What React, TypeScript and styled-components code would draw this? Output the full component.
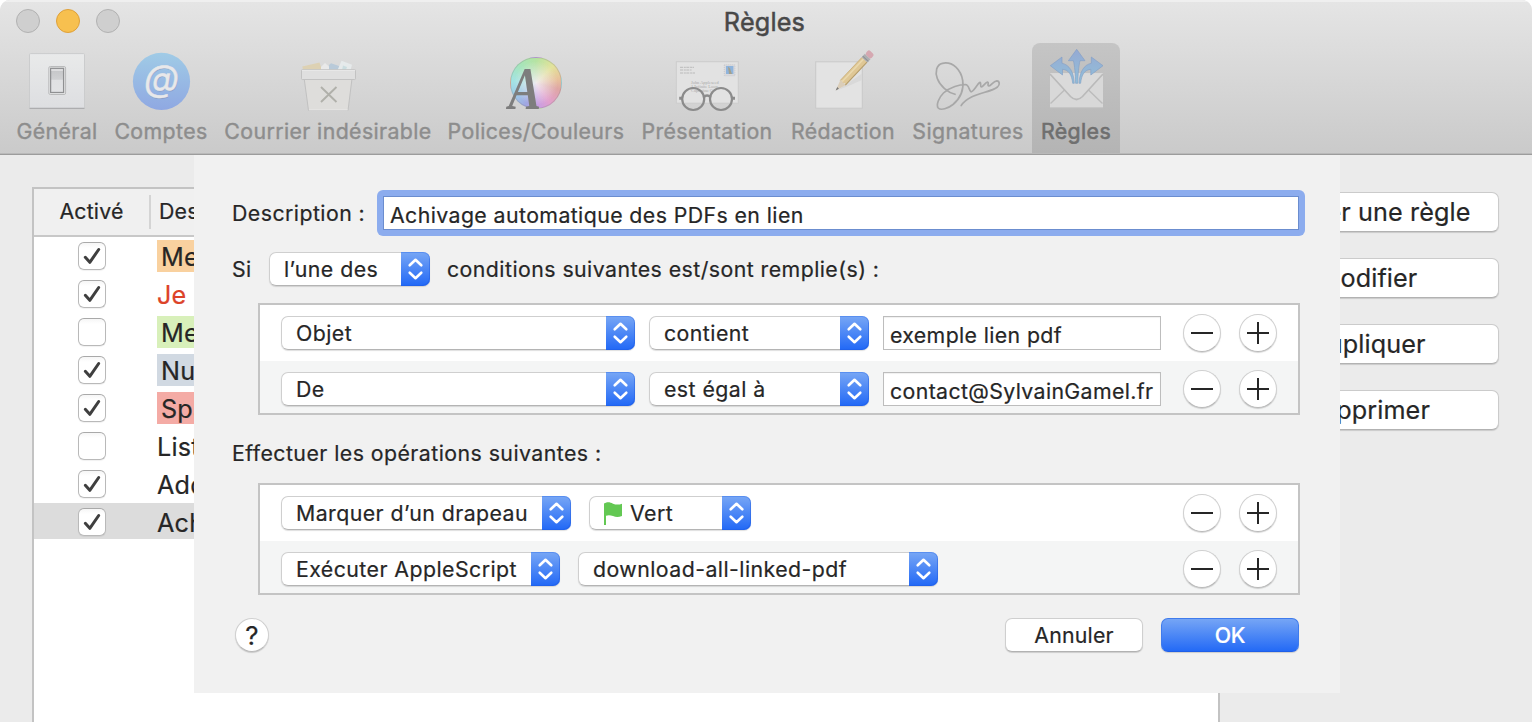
import React from 'react';
import styled, { createGlobalStyle } from 'styled-components';

const GlobalStyle = createGlobalStyle`
  * { box-sizing: border-box; }
  body {
    margin: 0;
    background: #fff;
    font-family: Inter, "Liberation Sans", sans-serif;
    font-size: 21.3px;
    letter-spacing: 0.45px;
    color: #262626;
    -webkit-text-stroke: 0.2px currentColor;
  }
  button, input { font: inherit; letter-spacing: inherit; color: inherit; }
`;

const Window = styled.div`
  width: 1532px;
  height: 722px;
  display: flex;
  flex-direction: column;
  overflow: hidden;
  border-radius: 10px 10px 0 0;
  background: #ebebeb;
`;

/* ---------- Title bar and toolbar ---------- */

const Header = styled.header`
  flex: none;
  height: 155px;
  display: flex;
  flex-direction: column;
  background: linear-gradient(#e5e5e5, #cacaca);
  border-bottom: 1px solid #9c9c9c;
  box-shadow: inset 0 2px 0 #efefef, inset 0 -1px 0 #b9b9b9;
`;

const TitleBar = styled.div`
  height: 43px;
  display: grid;
  grid-template-columns: 1fr auto 1fr;
  padding-right: 3px;
`;

const Lights = styled.div`
  display: flex;
  gap: 16px;
  padding: 9px 0 0 16px;
`;

const Light = styled.span<{ $active?: boolean }>`
  width: 24px;
  height: 24px;
  border-radius: 50%;
  background: ${p => (p.$active ? '#f7c04f' : '#cfcfcf')};
  border: 1px solid ${p => (p.$active ? '#dea03a' : '#b1b1b1')};
`;

const Title = styled.h1`
  margin: 0;
  font-size: 25.2px;
  font-weight: 400;
  letter-spacing: 0.2px;
  line-height: 44px;
  color: #484848;
  -webkit-text-stroke: 0.5px #484848;
`;

const Tabs = styled.nav`
  display: flex;
  padding-left: 8px;
`;

const Tab = styled.div<{ $width: number; $selected?: boolean }>`
  width: ${p => p.$width}px;
  height: 110px;
  padding-top: 3px;
  display: flex;
  flex-direction: column;
  align-items: center;
  border-radius: 8px 8px 0 0;
  background: ${p => (p.$selected ? 'linear-gradient(#c5c5c5, #b4b4b4)' : 'none')};
  color: ${p => (p.$selected ? '#6f6f6f' : '#8d8d8d')};
  -webkit-text-stroke: ${p => (p.$selected ? 0.6 : 0.4)}px currentColor;
`;

const TabLabel = styled.span`
  line-height: 26px;
  letter-spacing: 0.4px;
  white-space: nowrap;
`;

const IconStack = styled.div`
  display: grid;
  place-items: center;
  width: 80px;
  height: 72px;
  & > * { grid-area: 1 / 1; }
`;

const IconSvg = styled.svg`
  width: 80px;
  height: 72px;
  overflow: visible;
  -webkit-text-stroke: 0;
  letter-spacing: 0;
`;

const ColorWheel = styled.div`
  width: 52px;
  height: 52px;
  margin-top: 2px;
  border-radius: 50%;
  border: 1px solid rgba(120, 120, 120, 0.25);
  background:
    radial-gradient(circle, rgba(240, 236, 240, 0.95) 0, rgba(236, 236, 236, 0) 62%),
    conic-gradient(#b5e3a2, #e3e39c 45deg, #e8c29b 80deg, #dfa6a4 105deg, #e2a0cd 145deg, #cd9ee0 170deg, #a0a6e2 205deg, #9fcbe8 240deg, #a3e3e3 275deg, #a6e5bd 315deg, #b5e3a2);
`;

const GeneralIcon = () => (
  <IconSvg viewBox="0 0 80 72">
    <defs>
      <linearGradient id="plate" x1="0" y1="0" x2="0" y2="1">
        <stop offset="0" stopColor="#e9eaea" />
        <stop offset="1" stopColor="#dddee1" />
      </linearGradient>
      <linearGradient id="rocker" x1="0" y1="0" x2="0" y2="1">
        <stop offset="0" stopColor="#c4c5c7" />
        <stop offset="0.45" stopColor="#cfd0d2" />
        <stop offset="0.5" stopColor="#e0e1e3" />
        <stop offset="1" stopColor="#e2e3e5" />
      </linearGradient>
    </defs>
    <rect x="12.5" y="7.6" width="55" height="55" rx="1" fill="url(#plate)" stroke="#cbcccd" />
    <path d="M12.5 62.3h55" stroke="#adadaf" strokeWidth="1.3" />
    <rect x="31.8" y="20.5" width="16.8" height="28" rx="1.5" fill="#eceded" stroke="#b9babb" />
    <rect x="33.6" y="22.3" width="13" height="24.2" fill="url(#rocker)" stroke="#8f9092" strokeWidth="1.3" />
    <path d="M34.3 24h11.6" stroke="#e4e4e6" strokeWidth="1.4" />
  </IconSvg>
);

const AccountsIcon = () => (
  <IconSvg viewBox="0 0 80 72">
    <defs>
      <linearGradient id="accounts" x1="0" y1="0" x2="0" y2="1">
        <stop offset="0" stopColor="#a0cbe6" />
        <stop offset="1" stopColor="#8fa8e2" />
      </linearGradient>
    </defs>
    <circle cx="40.5" cy="35.4" r="28.6" fill="url(#accounts)" />
    <text x="41" y="46.4" textAnchor="middle" fontSize="36" fontStyle="italic" fill="#8793b5" opacity="0.6">@</text>
    <text x="40.6" y="45.2" textAnchor="middle" fontSize="36" fontStyle="italic" fill="#e8e8ea" stroke="#e8e8ea" strokeWidth="0.4">@</text>
  </IconSvg>
);

const JunkIcon = () => (
  <IconSvg viewBox="0 0 80 72">
    <path d="M14.3 20.5 31.5 16.5 34 24H15z" fill="#ddd1b3" />
    <path d="M33 21 37 17 42 21.5V24H33z" fill="#e9e9e9" />
    <path d="M41 19 43 17.3 52.5 20.5 51 24H41z" fill="#b9cad9" />
    <path d="M50 23 53.5 14.8 64 18.8 62.5 24H50z" fill="#e6eaeb" />
    <path d="M55 19.5l4 1.5-1 3h-4z" fill="#cbdde0" />
    <path d="M16.3 33.5h47.6l-3.9 31H20.5z" fill="#dedddb" stroke="#c1c1c1" />
    <rect x="13.5" y="23.7" width="54" height="9.8" rx="0.8" fill="#dfdfdf" stroke="#c2c2c2" />
    <path d="M14 24.4h53M20.8 64h39" stroke="#ececec" strokeWidth="0.8" />
    <path d="M33 41 48.5 56M48.5 41 33 56" stroke="#b0b0aa" strokeWidth="1.9" />
  </IconSvg>
);

const FontsIcon = () => (
  <IconStack>
    <ColorWheel />
    <IconSvg viewBox="0 0 80 72">
      <text
        transform="translate(12.6 62.8) scale(0.8 1)"
        fontFamily="Liberation Serif, serif"
        fontSize="61"
        fontWeight="700"
        fontStyle="italic"
        fill="#7d7d7d"
      >
        A
      </text>
    </IconSvg>
  </IconStack>
);

const ViewingIcon = () => (
  <IconSvg viewBox="0 0 80 72">
    <rect x="9.3" y="15.7" width="62" height="41.5" fill="#e2e2e2" stroke="#cccccc" />
    <g stroke="#b5b5b5" strokeWidth="0.9" strokeDasharray="3 0.8 2 0.5">
      <path d="M13 21.3h14M13 24h11.5M13 27h15" />
    </g>
    <g fontFamily="Liberation Serif, serif" fontSize="4.4" fill="#a9a9a9">
      <text x="24" y="38.2">John Appleseed</text>
      <text x="24" y="42.2">1 Infinite Loop</text>
      <text x="24" y="46.2">Cupertino C</text>
    </g>
    <rect x="57.3" y="18.8" width="10.6" height="11" fill="#d9d9dc" stroke="#c9c9cd" strokeDasharray="1 1" />
    <rect x="59" y="20" width="7.4" height="8" fill="#8fb4dc" />
    <path d="M61 20.5l2 2 2 5.5h-3z" fill="#a3a08d" />
    <g fill="none" stroke="#8b8b8b" strokeWidth="2.2">
      <circle cx="26.2" cy="53" r="11" />
      <circle cx="54" cy="53" r="11" />
      <path d="M36.8 51.2c1.5-2.2 5-2.2 6.600 0" strokeWidth="2.6" />
      <path d="M12.2 52.3h3M65 52.3h3" strokeWidth="3" />
    </g>
  </IconSvg>
);

const ComposingIcon = () => (
  <IconSvg viewBox="0 0 80 72">
    <rect x="12.7" y="15.8" width="46.6" height="46.4" fill="#e3e3e3" stroke="#c9c9c9" />
    <path d="M35 44 59 27.5v6.5L43 41z" fill="#d9d9d9" />
    <g transform="translate(32.7 44.4) rotate(-46.7)">
      <path d="M0 0 11-3.7v7.4z" fill="#dacdb8" />
      <path d="M0 0 3.5-1.2v2.4z" fill="#777" />
      <path d="M10.5-3.7H42v7.4H10.5l1-1.8-1-2 1-1.8z" fill="#dfc795" />
      <path d="M11-1.3H42" stroke="#ead9ae" strokeWidth="1.6" />
      <path d="M10.5 3.4H42" stroke="#b39c6c" />
      <path d="M10.5-3.5H42" stroke="#c9b17e" strokeWidth="0.8" />
      <rect x="42" y="-3.9" width="4.6" height="7.8" fill="#adafb2" />
      <path d="M43.5-3.9v7.8" stroke="#8f9194" />
      <rect x="46.6" y="-3.8" width="5.8" height="7.6" rx="2" fill="#d5a8b1" />
    </g>
  </IconSvg>
);

const SignaturesIcon = () => (
  <IconSvg viewBox="0 0 80 72">
    <path
      d="M27 48.3C20 46.5 12 40 9.3 32.5 7 26 8.2 18.6 14.5 17.3 25 15.2 33 24 34.7 34.5 36 44 32 52.5 25 58.5 20 62.5 13 64.8 10.2 62 7.8 59 11 51.3 15.5 47 22 41 32 38.6 37.3 38.5 41.5 38.6 40.5 44.5 43 45.8 45.5 46 49 38.5 51.6 36.5 53.5 36 51.8 40.5 53.3 41 55 41 57.5 36.3 59.5 36 61.3 36.2 58.8 40 61 40 63.3 39.6 65.2 35 68.8 34.8 71.6 35 72.2 38.5 69.5 41 64.5 45.2 52 46.8 43.5 51 38.5 53.5 35.5 56 33.2 59.5"
      fill="none"
      stroke="#a8a8a8"
      strokeWidth="1.7"
      strokeLinecap="round"
      strokeLinejoin="round"
    />
  </IconSvg>
);

const RulesIcon = () => (
  <IconSvg viewBox="0 0 80 72">
    <defs>
      <linearGradient id="arrows" gradientUnits="userSpaceOnUse" x1="0" y1="3" x2="0" y2="38">
        <stop offset="0" stopColor="#95a9d3" />
        <stop offset="0.5" stopColor="#94b5d6" />
        <stop offset="1" stopColor="#8fbfd9" />
      </linearGradient>
    </defs>
    <rect x="14" y="27" width="53" height="35" fill="#d8d8d8" />
    <path d="M14 61.7h53" stroke="#c2c2c2" />
    <path d="M14.5 57.5 29 43.5M66.5 57.5 52 43.5" stroke="#bcbcbc" strokeWidth="1.4" />
    <path d="M14 28 34.5 50.5q6 6 12 0L67 28" fill="#dadada" stroke="#bababa" strokeWidth="1.7" />
    <g fill="url(#arrows)" stroke="#809cc4" strokeWidth="0.6" strokeLinejoin="round">
      <path d="M14.3 19.7 26 11v6.2c7.5 1.8 11.7 8.5 12.3 20.1h-1.6c-1-9-4.2-13.5-10.2-14V29z" />
      <path d="M67 19.7 55.3 11v6.2c-7.5 1.8-11.7 8.5-12.3 20.1h1.6c1-9 4.2-13.5 10.2-14V29z" />
      <path d="M40.7 3.3 49 14.7h-5c-1.2 5-2 13-2.2 22.6h-2.2c-.2-9.6-1-17.6-2.2-22.6h-5z" />
    </g>
  </IconSvg>
);

const tabs = [
  { label: 'Général', width: 98, Icon: GeneralIcon },
  { label: 'Comptes', width: 110, Icon: AccountsIcon },
  { label: 'Courrier indésirable', width: 224, Icon: JunkIcon },
  { label: 'Polices/Couleurs', width: 192, Icon: FontsIcon },
  { label: 'Présentation', width: 150, Icon: ViewingIcon },
  { label: 'Rédaction', width: 122, Icon: ComposingIcon },
  { label: 'Signatures', width: 128, Icon: SignaturesIcon },
  { label: 'Règles', width: 88, Icon: RulesIcon, selected: true },
];

/* ---------- Rule list behind the sheet ---------- */

const Content = styled.main`
  position: relative;
  flex: 1;
  display: flex;
  align-items: flex-start;
  gap: 16px;
  padding: 32px 33px 0 32px;
`;

const RuleTable = styled.section`
  width: 1188px;
  height: 600px;
  border: 2px solid #c3c3c3;
  background: #fff;
`;

const TableHead = styled.div`
  display: flex;
  align-items: center;
  height: 48px;
  background: #f0f0f0;
  border-bottom: 2px solid #c8c8c8;
`;

const HeadCell = styled.div<{ $width?: number }>`
  width: ${p => (p.$width ? `${p.$width}px` : 'auto')};
  height: 34px;
  line-height: 33px;
  text-align: ${p => (p.$width ? 'center' : 'left')};
  padding-left: ${p => (p.$width ? 0 : 8)}px;
  border-right: ${p => (p.$width ? '2px solid #d4d4d4' : 'none')};
  letter-spacing: 0.2px;
`;

const RuleRow = styled.div<{ $selected?: boolean }>`
  display: flex;
  align-items: flex-start;
  height: 36px;
  margin-bottom: 2px;
  padding-left: 44px;
  background: ${p => (p.$selected ? '#dcdcdc' : '#fff')};
`;

const CheckBox = styled.span`
  display: grid;
  place-items: center;
  width: 28px;
  height: 28px;
  margin: 5px 51px 0 0;
  border: 1px solid #b9b9b9;
  border-top-color: #a9a9a9;
  border-radius: 6px;
  background: linear-gradient(#f6f6f6, #fff 5px);
  box-shadow: 0 1px 1px rgba(0, 0, 0, 0.06);
`;

const RuleName = styled.span<{ $fill?: string; $ink?: string }>`
  flex: 1;
  height: 32px;
  margin-top: 3px;
  padding-left: ${p => (p.$fill ? 4 : 0)}px;
  font-size: 25.2px;
  line-height: 35px;
  letter-spacing: 0.2px;
  white-space: nowrap;
  background: ${p => p.$fill ?? 'none'};
  color: ${p => p.$ink ?? 'inherit'};
`;

const rules = [
  { name: 'Mes', on: true, fill: '#f9d19f' },
  { name: 'Je', on: true, ink: '#dc4328' },
  { name: 'Mes', on: false, fill: '#d8f0ba' },
  { name: 'Nua', on: true, fill: '#d1d9e2' },
  { name: 'Spa', on: true, fill: '#f4aba5' },
  { name: 'Liste', on: false },
  { name: 'Add', on: true },
  { name: 'Achi', on: true, selected: true },
];

const SideButtons = styled.div`
  flex: 1;
  display: flex;
  flex-direction: column;
  gap: 26px;
  padding-top: 5px;
`;

const SideButton = styled.button`
  height: 40px;
  padding: 0;
  font-size: 25.2px;
  letter-spacing: 0.1px;
  line-height: 38px;
  background: #fff;
  border: 1px solid #cbcbcb;
  border-bottom-color: #b2b2b2;
  border-radius: 7px;
  box-shadow: 0 1px 1px rgba(0, 0, 0, 0.14);
`;

/* ---------- Rule editor sheet ---------- */

const Sheet = styled.section`
  position: absolute;
  left: 194px;
  top: 0;
  width: 1146px;
  height: 538px;
  padding: 35px 35px 0 38px;
  background: #f1f1f1;
`;

const FormRow = styled.div`
  display: flex;
  align-items: center;
`;

const FieldLabel = styled.label<{ $width?: number }>`
  width: ${p => (p.$width ? `${p.$width}px` : 'auto')};
  line-height: 34px;
  white-space: nowrap;
`;

const DescriptionInput = styled.input`
  flex: 1;
  height: 34px;
  margin: 6px;
  padding: 4px 7px 0 6px;
  letter-spacing: 0.41px;
  border: 1px solid #6b8dcf;
  border-radius: 0;
  background: #fff;
  outline: 0;
  box-shadow: 0 0 0 6px #8cacee;
  clip-path: inset(-6px round 6px);
`;

const ValueInput = styled.input`
  width: 278px;
  height: 34px;
  padding: 4px 0 0 6px;
  letter-spacing: 0.37px;
  border: 1px solid #bdbdbd;
  border-radius: 0;
  background: #fff;
  box-shadow: inset 0 1px 1px #f0f0f0;
  outline: 0;
`;

const ConditionRow = styled(FormRow)`
  margin-top: 16px;
`;

const ConditionText = styled.span`
  margin-left: 17px;
`;

const SectionTitle = styled.h2`
  margin: 21px 0 13px;
  font-size: inherit;
  font-weight: 400;
  line-height: 34px;
`;

const Panel = styled.div<{ $top?: number }>`
  width: 1042px;
  height: 112px;
  margin: ${p => p.$top ?? 0}px 0 0 26px;
  border: 2px solid #c4c4c4;
`;

const PanelRow = styled.div<{ $gap: number; $alternate?: boolean }>`
  display: flex;
  gap: ${p => p.$gap}px;
  height: ${p => (p.$alternate ? 52 : 56)}px;
  padding: 11px 21px 0;
  background: ${p => (p.$alternate ? '#f4f5f5' : '#fff')};
`;

const SelectBox = styled.div<{ $width: number }>`
  flex: none;
  display: flex;
  width: ${p => p.$width}px;
  height: 34px;
  border-radius: 7px;
  box-shadow: 0 1px 1px rgba(0, 0, 0, 0.13);
`;

const SelectValue = styled.span`
  flex: 1;
  display: flex;
  gap: 8px;
  padding-left: 14px;
  line-height: 33px;
  white-space: nowrap;
  background: #fff;
  border: 1px solid #cfcfcf;
  border-bottom-color: #b4b4b4;
  border-right: 0;
  border-radius: 7px 0 0 7px;
`;

const SelectArrows = styled.span`
  width: 29px;
  height: 34px;
  border-radius: 0 7px 7px 0;
  background: linear-gradient(#78a7f5, #2168f6);
  box-shadow: inset 0 1px 0 rgba(60, 120, 235, 0.5), inset -1px -1px 0 rgba(30, 90, 225, 0.45);
`;

const StepperButtons = styled.div`
  display: flex;
  gap: 18px;
  margin: -2px 0 0 auto;
`;

const RoundButton = styled.button<{ $size: number }>`
  display: grid;
  place-items: center;
  width: ${p => p.$size}px;
  height: ${p => p.$size}px;
  padding: 0;
  border-radius: 50%;
  border: 1px solid #d0d0d0;
  border-bottom-color: #b9b9b9;
  background: #fff;
  box-shadow: 0 1px 1px rgba(0, 0, 0, 0.16);
`;

const HelpButton = styled(RoundButton)`
  margin: 0 auto 0 3px;
  font-size: 26px;
  line-height: 33px;
  letter-spacing: 0;
`;

const Footer = styled.footer`
  display: flex;
  gap: 18px;
  margin: 23px 6px 0 0;
`;

const DialogButton = styled.button<{ $primary?: boolean }>`
  width: 138px;
  height: 34px;
  padding: 0;
  line-height: 32px;
  letter-spacing: ${p => (p.$primary ? -0.2 : 0.2)}px;
  border-radius: 7px;
  border: 1px solid ${p => (p.$primary ? '#3f7bec' : '#cfcfcf')};
  border-bottom-color: ${p => (p.$primary ? '#1f5fe8' : '#b2b2b2')};
  background: ${p => (p.$primary ? 'linear-gradient(#78a7f5, #2168f6) border-box' : '#fff')};
  color: ${p => (p.$primary ? '#fff' : '#262626')};
  font-weight: ${p => (p.$primary ? 500 : 400)};
  box-shadow: 0 1px 1px rgba(0, 0, 0, 0.15);
`;

const CheckMark = () => (
  <svg width="26" height="26" viewBox="0 0 26 26">
    <path d="M6.3 14.3 10.8 19.3 19.7 6.5" fill="none" stroke="#3f3f3f" strokeWidth="3" strokeLinecap="round" strokeLinejoin="round" />
  </svg>
);

const FlagIcon = () => (
  <svg width="18" height="23" viewBox="0 0 18 23">
    <path d="M0 1.500C4-.5 6 .3 9 1.700c3 1.200 6 1.200 9 0v12.200c-3.500 1.500-6 1.300-9 .2-2.500-1-4.500-1.300-7-.4V23H0z" fill="#63c853" />
  </svg>
);

const FlagSlot = styled.span`
  display: block;
  padding-top: 5px;
  line-height: 0;
`;

function Select({ width, flag, children }: { width: number; flag?: boolean; children: React.ReactNode }) {
  return (
    <SelectBox $width={width}>
      <SelectValue>
        {flag && <FlagSlot><FlagIcon /></FlagSlot>}
        <span>{children}</span>
      </SelectValue>
      <SelectArrows>
        <svg width="29" height="34" viewBox="0 0 29 34">
          <path d="M8.700 13.300 14.500 7.800 20.300 13.300M8.700 20.700 14.500 26.200 20.300 20.700" fill="none" stroke="#fff" strokeWidth="2.600" strokeLinecap="round" strokeLinejoin="round" />
        </svg>
      </SelectArrows>
    </SelectBox>
  );
}

function Steppers() {
  return (
    <StepperButtons>
      <RoundButton $size={38} aria-label="Supprimer">
        <svg width="36" height="36" viewBox="0 0 36 36"><path d="M7 18h22" stroke="#262626" strokeWidth="2" /></svg>
      </RoundButton>
      <RoundButton $size={38} aria-label="Ajouter">
        <svg width="36" height="36" viewBox="0 0 36 36"><path d="M7 18h22M18 7v22" stroke="#262626" strokeWidth="2" /></svg>
      </RoundButton>
    </StepperButtons>
  );
}

export default function App() {
  return (
    <>
      <GlobalStyle />
      <Window>
        <Header>
          <TitleBar>
            <Lights>
              <Light />
              <Light $active />
              <Light />
            </Lights>
            <Title>Règles</Title>
          </TitleBar>
          <Tabs>
            {tabs.map(({ label, width, Icon, selected }) => (
              <Tab key={label} $width={width} $selected={selected}>
                <Icon />
                <TabLabel>{label}</TabLabel>
              </Tab>
            ))}
          </Tabs>
        </Header>

        <Content>
          <RuleTable>
            <TableHead>
              <HeadCell $width={117}>Activé</HeadCell>
              <HeadCell>Desc</HeadCell>
            </TableHead>
            {rules.map((rule, i) => (
              <RuleRow key={i} $selected={rule.selected}>
                <CheckBox>{rule.on && <CheckMark />}</CheckBox>
                <RuleName $fill={rule.fill} $ink={rule.ink}>{rule.name}</RuleName>
              </RuleRow>
            ))}
          </RuleTable>
          <SideButtons>
            <SideButton>Ajouter une règle</SideButton>
            <SideButton>Modifier</SideButton>
            <SideButton>Dupliquer</SideButton>
            <SideButton>Supprimer</SideButton>
          </SideButtons>

          <Sheet>
            <FormRow>
              <FieldLabel $width={145}>Description :</FieldLabel>
              <DescriptionInput defaultValue="Achivage automatique des PDFs en lien" />
            </FormRow>
            <ConditionRow>
              <FieldLabel $width={37}>Si</FieldLabel>
              <Select width={161}>l’une des</Select>
              <ConditionText>conditions suivantes est/sont remplie(s) :</ConditionText>
            </ConditionRow>

            <Panel $top={17}>
              <PanelRow $gap={14}>
                <Select width={354}>Objet</Select>
                <Select width={220}>contient</Select>
                <ValueInput defaultValue="exemple lien pdf" />
                <Steppers />
              </PanelRow>
              <PanelRow $gap={14} $alternate>
                <Select width={354}>De</Select>
                <Select width={220}>est égal à</Select>
                <ValueInput defaultValue="contact@SylvainGamel.fr" />
                <Steppers />
              </PanelRow>
            </Panel>

            <SectionTitle>Effectuer les opérations suivantes :</SectionTitle>

            <Panel>
              <PanelRow $gap={18}>
                <Select width={290}>Marquer d’un drapeau</Select>
                <Select width={162} flag>Vert</Select>
                <Steppers />
              </PanelRow>
              <PanelRow $gap={18} $alternate>
                <Select width={279}>Exécuter AppleScript</Select>
                <Select width={360}>download-all-linked-pdf</Select>
                <Steppers />
              </PanelRow>
            </Panel>

            <Footer>
              <HelpButton $size={34}>?</HelpButton>
              <DialogButton>Annuler</DialogButton>
              <DialogButton $primary>OK</DialogButton>
            </Footer>
          </Sheet>
        </Content>
      </Window>
    </>
  );
}
